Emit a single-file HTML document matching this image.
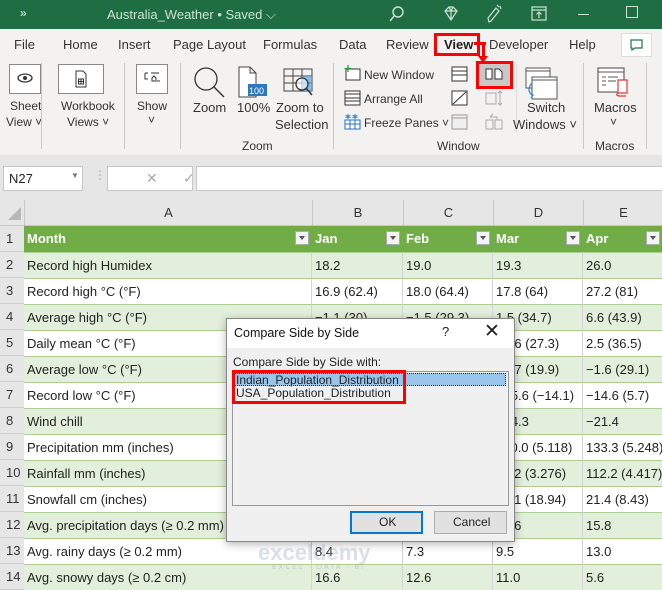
<!DOCTYPE html>
<html><head><meta charset="utf-8"><style>
*{margin:0;padding:0;box-sizing:border-box}
body{width:662px;height:588px;overflow:hidden;position:relative;font-family:"Liberation Sans",sans-serif;background:#fff;color:#222}
.a{position:absolute}
.t{position:absolute;white-space:nowrap}
.tab{font-size:13px;color:#333;top:37px}
.rb{font-size:12px;color:#333;text-align:center}
.cell{position:absolute;height:26px;line-height:26px;font-size:13px;padding-left:3px;white-space:nowrap;overflow:hidden;border-right:1px solid #d4d4d4}
.rh{position:absolute;left:0;width:24px;height:26px;line-height:26px;font-size:13px;padding-left:6px;background:#e6e6e6;color:#333;border-bottom:1px solid #cfcfcf}
.dd{position:absolute;top:5px;width:14px;height:14px;background:#f4f4f4;border:1px solid #aaa}
.dd:after{content:"";position:absolute;left:3px;top:4px;border-left:3px solid transparent;border-right:3px solid transparent;border-top:4px solid #555}
</style></head><body>
<div class="a" style="left:0;top:0;width:662px;height:29px;background:#1f6e43"></div>
<div class="t" style="left:20px;top:6px;color:#dfe;font-size:12px">»</div>
<div class="t" style="left:107px;top:7px;color:#cfe0d5;font-size:13px">Australia_Weather • Saved ⌵</div>
<svg class="a" style="left:386px;top:4px" width="20" height="20"><circle cx="12" cy="8" r="5" fill="none" stroke="#cfe0d5" stroke-width="1.4"/><path d="M8.5 11.5 L4 17" stroke="#cfe0d5" stroke-width="1.4"/></svg>
<svg class="a" style="left:441px;top:4px" width="20" height="20"><path d="M4 7 L8 3 H12 L16 7 L10 16 Z M4 7 H16 M8 3 L10 7 L12 3 M10 7 V16" fill="none" stroke="#cfe0d5" stroke-width="1.2"/></svg>
<svg class="a" style="left:484px;top:3px" width="20" height="22"><path d="M5 19 L4 15 L12 5 L15 8 L7 18 Z M13 2 L15 4 M16 3 L17 6" fill="none" stroke="#cfe0d5" stroke-width="1.2"/></svg>
<svg class="a" style="left:531px;top:6px" width="18" height="16"><rect x="1" y="1" width="14" height="13" fill="none" stroke="#cfe0d5" stroke-width="1.2"/><path d="M1 4 H15 M8 12 V6 M5.5 8.5 L8 6 L10.5 8.5" fill="none" stroke="#cfe0d5" stroke-width="1.2"/></svg>
<div class="a" style="left:578px;top:14px;width:11px;height:1px;background:#cfe0d5"></div>
<div class="a" style="left:626px;top:6px;width:12px;height:12px;border:1.3px solid #cfe0d5"></div>
<div class="a" style="left:0;top:29px;width:662px;height:126px;background:#f3f2f1"></div>
<div class="a" style="left:0;top:155px;width:662px;height:47px;background:#e6e6e6"></div>
<div class="t tab" style="left:14px">File</div>
<div class="t tab" style="left:63px">Home</div>
<div class="t tab" style="left:118px">Insert</div>
<div class="t tab" style="left:173px">Page Layout</div>
<div class="t tab" style="left:263px">Formulas</div>
<div class="t tab" style="left:339px">Data</div>
<div class="t tab" style="left:386px">Review</div>
<div class="t tab" style="left:444px;font-weight:bold;color:#1e1e1e">View</div>
<div class="a" style="left:434px;top:33px;width:46px;height:23px;border:3px solid #f00"></div>
<div class="a" style="left:474px;top:42px;width:12px;height:3px;background:#f00"></div>
<div class="a" style="left:482px;top:42px;width:3px;height:16px;background:#f00"></div>
<div class="a" style="left:478px;top:56px;border-left:5px solid transparent;border-right:5px solid transparent;border-top:7px solid #f00"></div>
<div class="t tab" style="left:489px">Developer</div>
<div class="t tab" style="left:569px">Help</div>
<div class="a" style="left:621px;top:33px;width:31px;height:24px;background:#fff;border:1px solid #ddd"></div>
<svg class="a" style="left:629px;top:38px" width="16" height="14"><path d="M2 2 H13 V10 H6 L3 12 V10 H2 Z" fill="none" stroke="#217346" stroke-width="1.2"/></svg>
<div class="a" style="left:9px;top:64px;width:32px;height:30px;background:#fff;border:1px solid #888"></div>
<svg class="a" style="left:16px;top:71px" width="18" height="14"><ellipse cx="9" cy="7" rx="7" ry="4" fill="none" stroke="#333" stroke-width="1.3"/><circle cx="9" cy="7" r="2" fill="#333"/></svg>
<div class="t rb" style="left:10px;top:99px">Sheet</div>
<div class="t rb" style="left:6px;top:115px">View ˅</div>
<div class="a" style="left:41px;top:63px;width:1px;height:86px;background:#c8c8c8"></div>
<div class="a" style="left:58px;top:64px;width:46px;height:30px;background:#fff;border:1px solid #888"></div>
<svg class="a" style="left:74px;top:70px" width="14" height="18"><path d="M2 1 H9 L12 4 V17 H2 Z" fill="none" stroke="#333"/><rect x="4.5" y="9" width="5" height="5" fill="none" stroke="#333"/><path d="M7 9 V14 M4.5 11.5 H9.5" stroke="#333"/></svg>
<div class="t rb" style="left:61px;top:99px">Workbook</div>
<div class="t rb" style="left:67px;top:115px">Views ˅</div>
<div class="a" style="left:124px;top:63px;width:1px;height:86px;background:#c8c8c8"></div>
<div class="a" style="left:136px;top:64px;width:32px;height:30px;background:#fff;border:1px solid #888"></div>
<svg class="a" style="left:143px;top:70px" width="20" height="18"><path d="M2 3 H5 M2 3 V9 H5 M8 3 H16 M9 8 L11 6 L13 8 V11 H9 Z M14 11 H17" fill="none" stroke="#333"/></svg>
<div class="t rb" style="left:137px;top:99px">Show</div>
<div class="t rb" style="left:148px;top:113px">˅</div>
<div class="a" style="left:180px;top:63px;width:1px;height:86px;background:#c8c8c8"></div>
<svg class="a" style="left:192px;top:66px" width="36" height="36"><circle cx="14" cy="13" r="11" fill="none" stroke="#333" stroke-width="1.3"/><path d="M22 21 L32 31" stroke="#333" stroke-width="1.4"/></svg>
<div class="t rb" style="left:193px;top:100px;font-size:13px">Zoom</div>
<svg class="a" style="left:236px;top:66px" width="32" height="34"><path d="M3 1 H14 L20 7 V31 H3 Z M14 1 V7 H20" fill="#fff" stroke="#444"/><rect x="12" y="18" width="19" height="12" fill="#2b79c2"/><text x="13" y="28" font-size="9" fill="#fff" font-family="Liberation Sans">100</text></svg>
<div class="t rb" style="left:237px;top:100px;font-size:13px">100%</div>
<svg class="a" style="left:283px;top:68px" width="34" height="32"><path d="M1 1 H29 V23 H1 Z M1 8 H29 M1 15 H29 M10 1 V23 M19 1 V23" fill="none" stroke="#444"/><rect x="19" y="8" width="10" height="15" fill="#5aa6e6" opacity=".7"/><circle cx="19" cy="16" r="6" fill="#fff" fill-opacity=".6" stroke="#333" stroke-width="1.3"/><path d="M23 20 L29 27" stroke="#333" stroke-width="1.5"/></svg>
<div class="t rb" style="left:276px;top:100px;font-size:13px">Zoom to</div>
<div class="t rb" style="left:275px;top:117px;font-size:13px">Selection</div>
<div class="t rb" style="left:242px;top:139px">Zoom</div>
<div class="a" style="left:333px;top:63px;width:1px;height:86px;background:#c8c8c8"></div>
<svg class="a" style="left:344px;top:65px" width="18" height="16"><rect x="2" y="4" width="14" height="11" fill="#fff" stroke="#333"/><path d="M4 0 V7 M0.5 3.5 H7.5" stroke="#2a9a3a" stroke-width="1.3"/></svg>
<div class="t rb" style="left:364px;top:68px">New Window</div>
<svg class="a" style="left:344px;top:90px" width="18" height="16"><rect x="1" y="1" width="15" height="14" fill="#fff" stroke="#333"/><path d="M1 4 H16 M1 8 H16 M1 11 H16" stroke="#333"/></svg>
<div class="t rb" style="left:364px;top:92px">Arrange All</div>
<svg class="a" style="left:344px;top:114px" width="18" height="16"><path d="M1 6 H16 V15 H1 Z M6 6 V15 M11 6 V15 M1 10 H16" fill="#fff" stroke="#2b6fc0"/><path d="M4 0 V5 M1.5 1.5 L6.5 3.5 M6.5 1.5 L1.5 3.5 M11 0 V5 M8.5 1.5 L13.5 3.5 M13.5 1.5 L8.5 3.5" stroke="#2b6fc0"/></svg>
<div class="t rb" style="left:364px;top:116px">Freeze Panes ˅</div>
<svg class="a" style="left:451px;top:66px" width="18" height="16"><rect x="1" y="1" width="15" height="14" fill="#fff" stroke="#333"/><path d="M1 5 H16 M1 9 H16" stroke="#333"/></svg>
<svg class="a" style="left:451px;top:90px" width="18" height="16"><rect x="1" y="1" width="15" height="14" fill="#fff" stroke="#333"/><path d="M2 14 L15 2" stroke="#333"/></svg>
<svg class="a" style="left:451px;top:114px" width="18" height="16"><rect x="1" y="1" width="15" height="14" fill="#f0f0f0" stroke="#999"/><path d="M1 4 H16" stroke="#999"/></svg>
<div class="a" style="left:476px;top:61px;width:37px;height:28px;border:3px solid #f00"></div>
<div class="a" style="left:479px;top:64px;width:31px;height:22px;background:#c8c8c8"></div>
<svg class="a" style="left:484px;top:67px" width="20" height="14"><path d="M2 2 H8 V12 H2 Z M11 2 H15 L18 5 V12 H11 Z" fill="#fff" stroke="#333"/></svg>
<svg class="a" style="left:484px;top:89px" width="20" height="18"><path d="M2 4 H12 V15 H2 Z" fill="none" stroke="#aaa"/><path d="M16 2 V16 M14 4 L16 2 L18 4 M14 14 L16 16 L18 14" fill="none" stroke="#aaa"/></svg>
<svg class="a" style="left:484px;top:112px" width="20" height="18"><path d="M2 8 H9 V17 H2 Z M11 8 H18 V17 H11 Z M6 5 L9 2 M6 5 H13 V8" fill="none" stroke="#aaa"/></svg>
<div class="a" style="left:516px;top:63px;width:1px;height:70px;background:#ddd"></div>
<svg class="a" style="left:524px;top:66px" width="36" height="36"><path d="M2 2 H26 V22 H2 Z M2 5 H26" fill="#fff" stroke="#555"/><path d="M8 11 H33 V33 H8 Z M8 14 H33" fill="#fff" stroke="#555"/><path d="M8 17 Q2 24 8 29 M6 27 L9 29 L7 32" fill="none" stroke="#2b8ae0" stroke-width="1.3"/></svg>
<div class="t rb" style="left:527px;top:100px;font-size:13px">Switch</div>
<div class="t rb" style="left:513px;top:117px;font-size:13px">Windows ˅</div>
<div class="t rb" style="left:437px;top:139px">Window</div>
<div class="a" style="left:583px;top:63px;width:1px;height:86px;background:#c8c8c8"></div>
<svg class="a" style="left:596px;top:66px" width="36" height="32"><rect x="2" y="2" width="26" height="24" fill="#fff" stroke="#444"/><path d="M2 6 H28 M6 11 H10 M12 11 H22 M6 15 H10 M12 15 H20 M6 19 H10" stroke="#555"/><path d="M22 14 H31 V27 H22 Z M22 27 Q19 29 23 30 H30" fill="#fff" stroke="#e33" stroke-width="1.2"/></svg>
<div class="t rb" style="left:594px;top:100px;font-size:13px">Macros</div>
<div class="t rb" style="left:610px;top:115px">˅</div>
<div class="t rb" style="left:595px;top:139px">Macros</div>
<div class="a" style="left:646px;top:63px;width:1px;height:86px;background:#c8c8c8"></div>
<div class="a" style="left:3px;top:166px;width:80px;height:25px;background:#fff;border:1px solid #c6c6c6"></div>
<div class="t" style="left:9px;top:171px;font-size:13px">N27</div>
<div class="t" style="left:71px;top:171px;font-size:8px;color:#777">▼</div>
<div class="t" style="left:94px;top:168px;font-size:12px;color:#aaa">⋮</div>
<div class="a" style="left:107px;top:166px;width:86px;height:25px;background:#fff;border:1px solid #c6c6c6"></div>
<div class="t" style="left:146px;top:170px;font-size:14px;color:#aaa">✕</div>
<div class="t" style="left:183px;top:170px;font-size:14px;color:#aaa">✓</div>
<div class="t" style="left:220px;top:170px;font-size:13px;font-style:italic;font-family:'Liberation Serif',serif;color:#444">fx</div>
<div class="a" style="left:196px;top:166px;width:470px;height:25px;background:#fff;border:1px solid #c6c6c6"></div>
<div class="a" style="left:0;top:200px;width:662px;height:26px;background:#e6e6e6;border-bottom:1px solid #c6c6c6"></div>
<div class="a" style="left:8px;top:207px;border-left:13px solid transparent;border-bottom:13px solid #b8b8b8"></div>
<div id="hdr"></div>
<div id="grid"></div>
<div class="a" style="left:226px;top:318px;width:289px;height:224px;background:#f0f0f0;border:1px solid #888;box-shadow:0 2px 8px rgba(0,0,0,.3)"></div>
<div class="a" style="left:227px;top:319px;width:287px;height:29px;background:#fff"></div>
<div class="t" style="left:234px;top:326px;font-size:12.5px;color:#111">Compare Side by Side</div>
<div class="t" style="left:442px;top:324px;font-size:13px">?</div>
<div class="t" style="left:484px;top:320px;font-size:19px;font-weight:lighter">✕</div>
<div class="t" style="left:233px;top:355px;font-size:12px">Compare Side by Side with:</div>
<div class="a" style="left:232px;top:371px;width:277px;height:135px;background:#f0f0f0;border:1px solid #999"></div>
<div class="a" style="left:234px;top:373px;width:272px;height:13px;background:#99c5ea;border:1px dotted #333"></div>
<div class="t" style="left:236px;top:373px;font-size:12px">Indian_Population_Distribution</div>
<div class="t" style="left:236px;top:386px;font-size:12px">USA_Population_Distribution</div>
<div class="a" style="left:232px;top:370px;width:174px;height:34px;border:3px solid #f00"></div>
<div class="a" style="left:350px;top:511px;width:73px;height:23px;background:#e1e1e1;border:2px solid #0078d7"></div>
<div class="t" style="left:379px;top:515px;font-size:12px">OK</div>
<div class="a" style="left:434px;top:511px;width:73px;height:23px;background:#e1e1e1;border:1px solid #adadad"></div>
<div class="t" style="left:453px;top:515px;font-size:12px">Cancel</div>
<div class="t" style="left:258px;top:540px;font-size:22px;font-weight:bold;color:rgba(150,170,190,.35)">exceldemy</div>
<div class="t" style="left:272px;top:564px;font-size:7px;letter-spacing:2px;color:rgba(150,170,190,.5)">EXCEL · DATA · BI</div>
<script>
(function(){
var cols=[[24,288],[312,91],[403,90],[493,90],[583,80]];
var L=['A','B','C','D','E'],h='';
for(var i=0;i<5;i++)h+='<div class="t" style="left:'+cols[i][0]+'px;top:200px;width:'+cols[i][1]+'px;height:26px;line-height:26px;text-align:center;font-size:13px;border-left:1px solid #c6c6c6;color:#333">'+L[i]+'</div>';
document.getElementById('hdr').innerHTML=h;
var rows=[
['Record high Humidex','18.2','19.0','19.3','26.0'],
['Record high °C (°F)','16.9 (62.4)','18.0 (64.4)','17.8 (64)','27.2 (81)'],
['Average high °C (°F)','−1.1 (30)','−1.5 (29.3)','1.5 (34.7)','6.6 (43.9)'],
['Daily mean °C (°F)','','','−2.6 (27.3)','2.5 (36.5)'],
['Average low °C (°F)','','','−6.7 (19.9)','−1.6 (29.1)'],
['Record low °C (°F)','','','−25.6 (−14.1)','−14.6 (5.7)'],
['Wind chill','','','−34.3','−21.4'],
['Precipitation mm (inches)','','','130.0 (5.118)','133.3 (5.248)'],
['Rainfall mm (inches)','','','83.2 (3.276)','112.2 (4.417)'],
['Snowfall cm (inches)','','','48.1 (18.94)','21.4 (8.43)'],
['Avg. precipitation days (≥ 0.2 mm)','','','16.6','15.8'],
['Avg. rainy days (≥ 0.2 mm)','8.4','7.3','9.5','13.0'],
['Avg. snowy days (≥ 0.2 cm)','16.6','12.6','11.0','5.6']];
var g='',T0=226;
g+='<div class="rh" style="top:'+T0+'px">1</div>';
var H=['Month','Jan','Feb','Mar','Apr'];
for(var i=0;i<5;i++){g+='<div class="cell" style="left:'+cols[i][0]+'px;top:'+T0+'px;width:'+cols[i][1]+'px;background:#70ad47;color:#fff;font-weight:bold;border-right:1px solid #70ad47">'+H[i]+'<div class="dd" style="left:'+(cols[i][1]-17)+'px"></div></div>';}
for(var r=0;r<rows.length;r++){var y=T0+26*(r+1);var bg=(r%2==0)?'#e2efda':'#fff';
g+='<div class="rh" style="top:'+y+'px">'+(r+2)+'</div>';
for(var i=0;i<5;i++)g+='<div class="cell" style="left:'+cols[i][0]+'px;top:'+y+'px;width:'+cols[i][1]+'px;background:'+bg+';border-top:1px solid #a9d08e">'+rows[r][i]+'</div>';}
document.getElementById('grid').innerHTML=g;
})();
</script>
</body></html>
